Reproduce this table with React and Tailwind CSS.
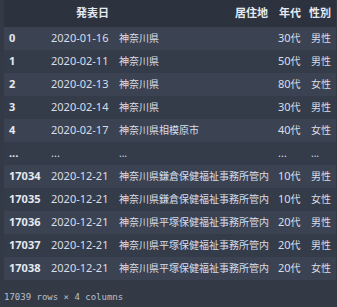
import React from "react";

const rows = [
    ["0", "2020-01-16", "神奈川県", "30", "男性"],
    ["1", "2020-02-11", "神奈川県", "50", "男性"],
    ["2", "2020-02-13", "神奈川県", "80", "女性"],
    ["3", "2020-02-14", "神奈川県", "30", "男性"],
    ["4", "2020-02-17", "神奈川県相模原市", "40", "女性"],
    ["...", "...", "...", null, "..."],
    ["17034", "2020-12-21", "神奈川県鎌倉保健福祉事務所管内", "10", "男性"],
    ["17035", "2020-12-21", "神奈川県鎌倉保健福祉事務所管内", "10", "女性"],
    ["17036", "2020-12-21", "神奈川県平塚保健福祉事務所管内", "20", "男性"],
    ["17037", "2020-12-21", "神奈川県平塚保健福祉事務所管内", "20", "男性"],
    ["17038", "2020-12-21", "神奈川県平塚保健福祉事務所管内", "20", "女性"],
];

const font = { fontFamily: '"Noto Sans", "Noto Sans CJK JP", sans-serif' };

export default function App() {
    return (
        <div className="min-h-[307px] w-[337px] overflow-hidden bg-[#333945] pl-1 text-[#d8dee9]" style={font}>
            <div className="w-[332px]">
                <div className="grid h-[27px] grid-cols-[42px_68px_159px_33px_30px] items-center bg-[#2d333e] font-bold text-[11px] text-[#e5e9f0]">
                    <div></div>
                    <div className="pr-[5px] text-right">発表日</div>
                    <div className="pr-[5px] text-right">居住地</div>
                    <div className="pr-[5px] text-right">年代</div>
                    <div className="pr-[5px] text-right">性別</div>
                </div>
                {rows.map((r, i) => (
                    <div
                        key={r[0] + i}
                        className={
                            "grid h-[23px] grid-cols-[42px_68px_159px_33px_30px] items-center " +
                            (i % 2 === 0 ? "bg-[#3b4353]" : "bg-[#353c49]")
                        }
                    >
                        <div className="pl-[5px] text-[11px] font-bold text-[#e5e9f0]">{r[0]}</div>
                        <div className="pl-[5px] text-[11px]">{r[1]}</div>
                        <div className="whitespace-nowrap pl-[5px] text-[10px]">{r[2]}</div>
                        <div className="pl-[5px] text-[11px]">
                            {r[3] === null ? "..." : (
                                <>
                                    {r[3]}
                                    <span className="text-[10px]">代</span>
                                </>
                            )}
                        </div>
                        <div className="whitespace-nowrap pl-[5px] text-[10px]">{r[4]}</div>
                    </div>
                ))}
            </div>
            <div className="pt-[11px] text-[9px] text-[#b8c0cf]" style={{ fontFamily: '"DejaVu Sans Mono", monospace' }}>
                17039 rows × 4 columns
            </div>
        </div>
    );
}
